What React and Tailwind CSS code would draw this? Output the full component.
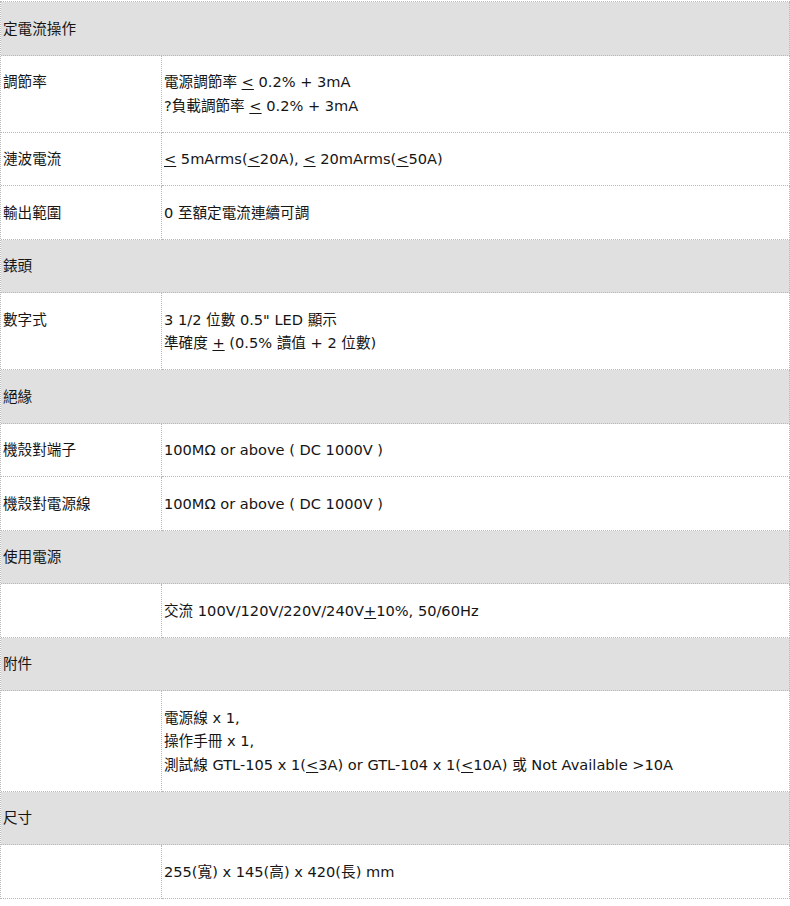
import React from "react";

const U = ({ children }) => <span className="underline underline-offset-2">{children}</span>;

const rows = [
  { h: "定電流操作" },
  {
    l: "調節率",
    r: (
      <>
        電源調節率 <U>&lt;</U> 0.2% + 3mA
        <br />
        ?負載調節率 <U>&lt;</U> 0.2% + 3mA
      </>
    ),
  },
  {
    l: "漣波電流",
    r: (
      <>
        <U>&lt;</U> 5mArms(<U>&lt;</U>20A), <U>&lt;</U> 20mArms(<U>&lt;</U>50A)
      </>
    ),
  },
  { l: "輸出範圍", r: "0 至額定電流連續可調" },
  { h: "錶頭" },
  {
    l: "數字式",
    r: (
      <>
        3 1/2 位數 0.5" LED 顯示
        <br />
        準確度 <U>+</U> (0.5% 讀值 + 2 位數)
      </>
    ),
  },
  { h: "絕緣" },
  { l: "機殼對端子", r: "100MΩ or above ( DC 1000V )" },
  { l: "機殼對電源線", r: "100MΩ or above ( DC 1000V )" },
  { h: "使用電源" },
  {
    l: "",
    r: (
      <>
        交流 100V/120V/220V/240V<U>+</U>10%, 50/60Hz
      </>
    ),
  },
  { h: "附件" },
  {
    l: "",
    r: (
      <>
        電源線 x 1,
        <br />
        操作手冊 x 1,
        <br />
        測試線 GTL-105 x 1(<U>&lt;</U>3A) or GTL-104 x 1(<U>&lt;</U>10A) 或 Not Available &gt;10A
      </>
    ),
  },
  { h: "尺寸" },
  { l: "", r: "255(寬) x 145(高) x 420(長) mm" },
];

export default function App() {
  return (
    <div
      className="w-[790px] bg-white pt-px text-[14.6px] leading-[23.5px] text-[#151515]"
      style={{ fontFamily: '"DejaVu Sans", "Noto Sans CJK TC", sans-serif' }}
    >
      <div className="grid grid-cols-[161px_1fr] border-t border-l border-dotted border-[#b8b8b8]">
        {rows.map((row, i) =>
          row.h ? (
            <div
              key={i}
              className="col-span-2 bg-[#e0e0e0] border-r border-b border-dotted border-[#b8b8b8] py-[14.5px] pl-[2px]"
            >
              {row.h}
            </div>
          ) : (
            <React.Fragment key={i}>
              <div className="border-r border-b border-dotted border-[#b8b8b8] py-[14.5px] pl-[2px]">
                {row.l}
              </div>
              <div className="border-r border-b border-dotted border-[#b8b8b8] py-[14.5px] pl-[2px]">
                {row.r}
              </div>
            </React.Fragment>
          )
        )}
      </div>
    </div>
  );
}
